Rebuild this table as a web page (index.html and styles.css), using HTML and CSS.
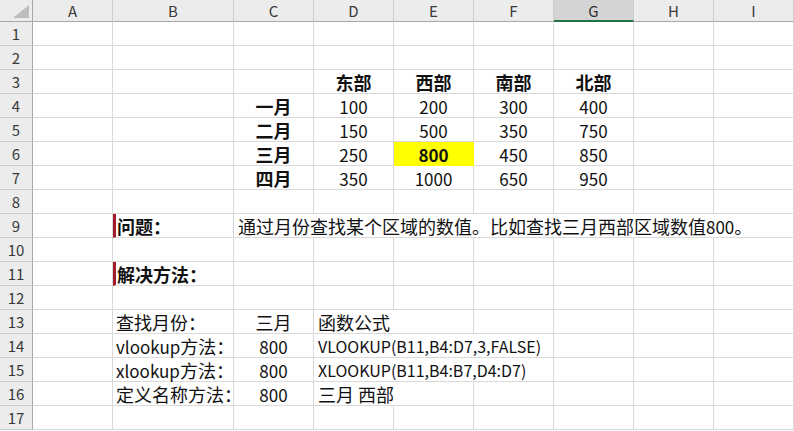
FILE: index.html
```html
<!DOCTYPE html>
<html lang="zh-CN">
<head>
<meta charset="utf-8">
<title>Sheet</title>
<link rel="stylesheet" href="styles.css">
</head>
<body>
<div class="sheet">
  <div class="corner"><svg width="18" height="14" viewBox="0 0 18 14"><polygon points="17,0 17,13 1,13" fill="#bdbdbd"/></svg></div>
  <div class="colhead">A</div><div class="colhead">B</div><div class="colhead">C</div><div class="colhead">D</div><div class="colhead">E</div><div class="colhead">F</div><div class="colhead sel">G</div><div class="colhead">H</div><div class="colhead">I</div>

  <div class="rowhead">1</div><div class="c"></div><div class="c"></div><div class="c"></div><div class="c"></div><div class="c"></div><div class="c"></div><div class="c"></div><div class="c"></div><div class="c"></div>
  <div class="rowhead">2</div><div class="c"></div><div class="c"></div><div class="c"></div><div class="c"></div><div class="c"></div><div class="c"></div><div class="c"></div><div class="c"></div><div class="c"></div>
  <div class="rowhead">3</div><div class="c"></div><div class="c"></div><div class="c"></div><div class="c ctr b">东部</div><div class="c ctr b">西部</div><div class="c ctr b">南部</div><div class="c ctr b">北部</div><div class="c"></div><div class="c"></div>
  <div class="rowhead">4</div><div class="c"></div><div class="c"></div><div class="c ctr b">一月</div><div class="c ctr num">100</div><div class="c ctr num">200</div><div class="c ctr num">300</div><div class="c ctr num">400</div><div class="c"></div><div class="c"></div>
  <div class="rowhead">5</div><div class="c"></div><div class="c"></div><div class="c ctr b">二月</div><div class="c ctr num">150</div><div class="c ctr num">500</div><div class="c ctr num">350</div><div class="c ctr num">750</div><div class="c"></div><div class="c"></div>
  <div class="rowhead">6</div><div class="c"></div><div class="c"></div><div class="c ctr b">三月</div><div class="c ctr num">250</div><div class="c ctr num b hl">800</div><div class="c ctr num">450</div><div class="c ctr num">850</div><div class="c"></div><div class="c"></div>
  <div class="rowhead">7</div><div class="c"></div><div class="c"></div><div class="c ctr b">四月</div><div class="c ctr num">350</div><div class="c ctr num">1000</div><div class="c ctr num">650</div><div class="c ctr num">950</div><div class="c"></div><div class="c"></div>
  <div class="rowhead">8</div><div class="c"></div><div class="c"></div><div class="c"></div><div class="c"></div><div class="c"></div><div class="c"></div><div class="c"></div><div class="c"></div><div class="c"></div>
  <div class="rowhead">9</div><div class="c"></div><div class="c b mark">问题：</div><div class="c span7 txt">通过月份查找某个区域的数值。比如查找三月西部区域数值<span class="num">800</span>。</div>
  <div class="rowhead">10</div><div class="c"></div><div class="c"></div><div class="c"></div><div class="c"></div><div class="c"></div><div class="c"></div><div class="c"></div><div class="c"></div><div class="c"></div>
  <div class="rowhead">11</div><div class="c"></div><div class="c b mark">解决方法：</div><div class="c"></div><div class="c"></div><div class="c"></div><div class="c"></div><div class="c"></div><div class="c"></div><div class="c"></div>
  <div class="rowhead">12</div><div class="c"></div><div class="c"></div><div class="c"></div><div class="c"></div><div class="c"></div><div class="c"></div><div class="c"></div><div class="c"></div><div class="c"></div>
  <div class="rowhead">13</div><div class="c"></div><div class="c lft">查找月份：</div><div class="c ctr">三月</div><div class="c span2 txt">函数公式</div><div class="c"></div><div class="c"></div><div class="c"></div><div class="c"></div>
  <div class="rowhead">14</div><div class="c"></div><div class="c lft"><span class="lat">vlookup</span>方法：</div><div class="c ctr num">800</div><div class="c span3 txt formula">VLOOKUP(B11,B4:D7,3,FALSE)</div><div class="c"></div><div class="c"></div><div class="c"></div>
  <div class="rowhead">15</div><div class="c"></div><div class="c lft"><span class="lat">xlookup</span>方法：</div><div class="c ctr num">800</div><div class="c span3 txt formula">XLOOKUP(B11,B4:B7,D4:D7)</div><div class="c"></div><div class="c"></div><div class="c"></div>
  <div class="rowhead">16</div><div class="c"></div><div class="c lft">定义名称方法：</div><div class="c ctr num">800</div><div class="c span2 txt">三月 西部</div><div class="c"></div><div class="c"></div><div class="c"></div><div class="c"></div>
  <div class="rowhead">17</div><div class="c"></div><div class="c"></div><div class="c"></div><div class="c"></div><div class="c"></div><div class="c"></div><div class="c"></div><div class="c"></div><div class="c"></div>
</div>
</body>
</html>
```

FILE: styles.css
```css
html, body {
  margin: 0;
  padding: 0;
  background: #ffffff;
  overflow: hidden;
}

.sheet {
  display: grid;
  grid-template-columns: 33px 80px 121px 80px 80px 80px 80px 80px 80px 80px;
  grid-template-rows: 22px repeat(17, 24px);
  width: 794px;
  font-family: "Noto Sans CJK SC", "Noto Sans", sans-serif;
  font-size: 18px;
  color: #111111;
}

.corner {
  background: #ececec;
  border-right: 1px solid #a8a8a8;
  border-bottom: 1px solid #a8a8a8;
  box-sizing: border-box;
  display: flex;
  align-items: flex-end;
  justify-content: flex-end;
  padding: 0 2px 2px 0;
}

.corner svg {
  display: block;
}

.colhead {
  background: #ececec;
  border-right: 1px solid #cdcdcd;
  border-bottom: 1px solid #a8a8a8;
  box-sizing: border-box;
  display: flex;
  align-items: center;
  justify-content: center;
  font-size: 15px;
  color: #3a3a3a;
  line-height: 1;
}

.colhead.sel {
  background: #d4d4d4;
  border-bottom: 2px solid #217346;
  color: #2f2f2f;
}

.rowhead {
  background: #ececec;
  border-right: 1px solid #a8a8a8;
  border-bottom: 1px solid #cdcdcd;
  box-sizing: border-box;
  display: flex;
  align-items: center;
  justify-content: center;
  font-size: 15px;
  color: #3a3a3a;
  line-height: 1;
}

.c {
  border-right: 1px solid #d9d9d9;
  border-bottom: 1px solid #d9d9d9;
  box-sizing: border-box;
  display: flex;
  align-items: center;
  white-space: nowrap;
  line-height: 1;
  padding: 1px 0 0 0;
  overflow: visible;
}

.ctr {
  justify-content: center;
}

.b {
  font-weight: 700;
}

.num {
  font-size: 17px;
}

.lat {
  font-size: 17px;
}

.formula {
  font-size: 16px;
}

.lft {
  padding-left: 3px;
}

.txt {
  padding-left: 4px;
}

.mark {
  border-left: 3px solid #a31c2c;
  padding-left: 1px;
}

.hl {
  background: #ffff00;
  border-color: #ffff00;
}

.span2 { grid-column: span 2; }
.span3 { grid-column: span 3; }
.span7 { grid-column: span 7; }
```
